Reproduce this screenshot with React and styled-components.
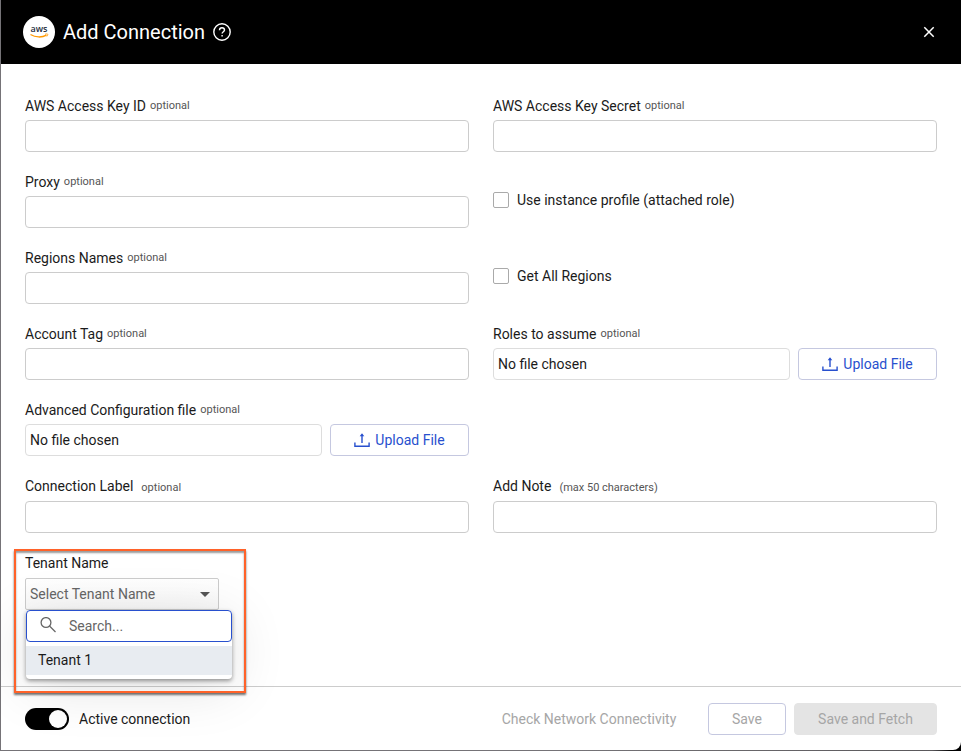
import React, { useState } from "react";
import styled, { createGlobalStyle } from "styled-components";

const GlobalStyle = createGlobalStyle`
  *, *::before, *::after { box-sizing: border-box; }
  html { background: #3a383b; }
  body {
    margin: 0;
    background: linear-gradient(90deg, #757377 60%, #5a585b 97%, #000 99%);
    color: #1b1b1b;
    font: 400 14px/20px Roboto, "Liberation Sans", sans-serif;
  }
  button, input, select { font: inherit; color: inherit; margin: 0; }
  #root { display: flow-root; }
`;

const Dialog = styled.form`
  display: flex;
  flex-direction: column;
  min-height: calc(100vh - 1px);
  margin: 0 0 1px 1px;
  background: #fff;
  border-bottom-right-radius: 8px;
`;

const Header = styled.header`
  display: flex;
  align-items: center;
  height: 64px;
  padding: 0 24px 0 22px;
  gap: 8px;
  background: #000;
  color: #fff;
`;

const Title = styled.h1`
  margin: 0;
  font-size: 20px;
  line-height: 28px;
  font-weight: 400;
`;

const IconButton = styled.button`
  display: flex;
  padding: 0;
  border: 0;
  background: none;
  color: #fff;
  margin-left: ${(p) => (p.$end ? "auto" : "0")};
`;

const Body = styled.main`
  flex: 1;
  display: grid;
  grid-template-columns: 1fr 1fr;
  align-content: start;
  gap: 20px 24px;
  padding: 32px 24px 0;
`;

const FieldBox = styled.div`
  grid-column-start: ${(p) => (p.$first ? 1 : "auto")};
  display: flex;
  flex-direction: column;
  gap: ${(p) => (p.$loose ? 5 : 4)}px;
`;

const LabelRow = styled.div`
  display: flex;
  align-items: ${(p) => (p.$loose ? "baseline" : "flex-start")};
  gap: ${(p) => (p.$loose ? 8 : 4)}px;
  height: 20px;
  white-space: nowrap;
`;

const Hint = styled.span`
  font-size: 11px;
  line-height: 20px;
  color: #555;
`;

const TextInput = styled.input`
  width: 100%;
  height: 32px;
  padding: 0 8px;
  border: 1px solid #ccc;
  border-radius: 4px;
  background: #fff;
`;

const FileRow = styled.div`
  display: flex;
  gap: 8px;
`;

const FileName = styled.output`
  flex: 1;
  height: 32px;
  padding: 5px 4px;
  border: 1px solid #ddd;
  border-radius: 4px;
`;

const Button = styled.button`
  display: flex;
  align-items: center;
  justify-content: center;
  gap: 5px;
  height: 32px;
  min-width: ${(p) => p.$width}px;
  padding: 0 8px;
  border: 1px solid #c5c8e0;
  border-radius: 4px;
  background: #fff;
  color: #2850ce;
  font-weight: 400;
  white-space: nowrap;

  &:disabled {
    color: #a6a6a6;
    background: ${(p) => (p.$filled ? "#e4e4e4" : "#fff")};
    border-color: ${(p) => (p.$filled ? "#e4e4e4" : p.$plain ? "transparent" : "#c5c8e0")};
  }
`;

const CheckLabel = styled.label`
  display: flex;
  align-items: center;
  align-self: center;
  gap: 8px;
`;

const Checkbox = styled.input`
  appearance: none;
  width: 16px;
  height: 16px;
  border: 1px solid #aaa;
  border-radius: 2px;
  background: #fff;

  &:checked { background: #2850ce; }
`;

const TenantField = styled(FieldBox)`
  position: relative;
  z-index: 1;
  width: 207px;
`;

const Highlight = styled.div`
  position: absolute;
  inset: -4px -14px -83px -11px;
  border: 2px solid #ff6229;
  box-shadow: 0 2px 2px rgba(0, 0, 0, 0.55), inset 0 2px 2px rgba(0, 0, 0, 0.4);
  pointer-events: none;
`;

const SelectBox = styled.div`
  display: grid;
  align-items: center;
  width: 194px;

  & > * { grid-area: 1 / 1; }
  & > svg { justify-self: end; margin-right: 9px; pointer-events: none; }
`;

const Select = styled.select`
  appearance: none;
  width: 100%;
  height: 32px;
  padding: 0 24px 0 4px;
  border: 1px solid #ccc;
  border-radius: 2px;
  background: linear-gradient(#fff, #f8f8f8);
  color: #666;
`;

const Menu = styled.div`
  position: absolute;
  top: 57px;
  left: 1px;
  right: 0;
  padding-bottom: 4px;
  border-radius: 4px;
  background: #fff;
  box-shadow: 0 2px 4px rgba(0, 0, 0, 0.4), 0 8px 56px rgba(0, 0, 0, 0.12);
`;

const SearchBox = styled.label`
  display: flex;
  align-items: center;
  gap: 12px;
  height: 32px;
  padding: 0 12px;
  border: 1px solid #2850ce;
  border-radius: 4px;
  background: #fff;
`;

const SearchInput = styled.input`
  flex: 1;
  min-width: 0;
  padding: 0;
  border: 0;
  outline: 0;
  background: none;

  &::placeholder { color: #666; opacity: 1; }
`;

const Option = styled.div`
  margin-top: 4px;
  padding: 4px 12px 5px;
  background: #e8ecf1;
`;

const Footer = styled.footer`
  display: flex;
  align-items: center;
  gap: 8px;
  height: 64px;
  padding: 0 24px;
  border-top: 1px solid #ccc;
`;

const SwitchLabel = styled.label`
  display: flex;
  align-items: center;
  gap: 10px;
  margin-right: auto;
`;

const Switch = styled.input`
  appearance: none;
  display: flex;
  align-items: center;
  width: 44px;
  height: 22px;
  padding: 0 2px;
  border-radius: 11px;
  background: #888;

  &::before {
    content: "";
    width: 18px;
    height: 18px;
    border-radius: 50%;
    background: #fff;
  }
  &:checked { background: #000; justify-content: flex-end; }
`;

function AwsLogo() {
  return (
    <svg width="32" height="32" viewBox="0 0 32 32" role="img" aria-label="AWS">
      <circle cx="16" cy="16" r="16" fill="#fff" />
      <text x="16" y="16" textAnchor="middle" fontFamily="Open Sans, sans-serif" fontSize="9" fontWeight="600" fill="#252f3e">aws</text>
      <path d="M7.500 18.500c5 3.200 11.500 3.200 16 .6" fill="none" stroke="#f90" strokeWidth="1.300" />
      <path d="M22 18.300c1-.5 2.300-.5 2.700-.2.300.4-.1 1.600-.9 2.400" fill="none" stroke="#f90" strokeWidth=".8" />
    </svg>
  );
}

function HelpIcon() {
  return (
    <svg width="18" height="18" viewBox="0 0 18 18" fill="none" stroke="currentColor" strokeWidth="1.400">
      <circle cx="9" cy="9" r="8.200" />
      <path d="M6.500 7.200C6.500 5.600 7.500 4.700 9 4.700s2.500.9 2.500 2.200c0 1.800-2.400 1.800-2.400 3.700" />
      <path d="M9.100 12v1.500" />
    </svg>
  );
}

function CloseIcon() {
  return (
    <svg width="16" height="16" viewBox="0 0 16 16" stroke="currentColor" strokeWidth="1.500">
      <path d="M3.300 3.300l9.400 9.400M12.700 3.300l-9.400 9.400" />
    </svg>
  );
}

function UploadIcon() {
  return (
    <svg width="16" height="16" viewBox="0 0 16 16" fill="none" stroke="currentColor" strokeWidth="1.400">
      <path d="M.9 10.500v3.800h14.200v-3.800M8 11V2.500" />
      <path d="M5.700 4.200L8 1.300l2.300 2.900z" fill="currentColor" stroke="none" />
    </svg>
  );
}

function SearchIcon() {
  return (
    <svg width="18" height="18" viewBox="0 0 18 18" fill="none" stroke="#666" strokeWidth="1.300">
      <circle cx="7" cy="5.500" r="4.900" />
      <path d="M10.500 9l6 6" />
    </svg>
  );
}

function Caret() {
  return (
    <svg width="10" height="5" viewBox="0 0 10 5" fill="#555">
      <path d="M0 0h10L5 5z" />
    </svg>
  );
}

function Field({ id, label, hint = "optional", first, loose }) {
  return (
    <FieldBox $first={first} $loose={loose}>
      <LabelRow $loose={loose}>
        <label htmlFor={id}>{label}</label>
        <Hint>{hint}</Hint>
      </LabelRow>
      <TextInput id={id} type="text" />
    </FieldBox>
  );
}

function FileField({ id, label, first }) {
  return (
    <FieldBox $first={first}>
      <LabelRow>
        <label htmlFor={id}>{label}</label>
        <Hint>optional</Hint>
      </LabelRow>
      <FileRow>
        <FileName>No file chosen</FileName>
        <Button id={id} type="button" $width={139}>
          <UploadIcon />
          Upload File
        </Button>
      </FileRow>
    </FieldBox>
  );
}

function Check({ label }) {
  return (
    <CheckLabel>
      <Checkbox type="checkbox" />
      {label}
    </CheckLabel>
  );
}

export default function App() {
  const [active, setActive] = useState(true);
  return (
    <>
      <GlobalStyle />
      <Dialog>
        <Header>
          <AwsLogo />
          <Title>Add Connection</Title>
          <IconButton type="button" aria-label="Help"><HelpIcon /></IconButton>
          <IconButton type="button" aria-label="Close" $end><CloseIcon /></IconButton>
        </Header>
        <Body>
          <Field id="key-id" label="AWS Access Key ID" />
          <Field id="key-secret" label="AWS Access Key Secret" />
          <Field id="proxy" label="Proxy" />
          <Check label="Use instance profile (attached role)" />
          <Field id="regions" label="Regions Names" />
          <Check label="Get All Regions" />
          <Field id="tag" label="Account Tag" />
          <FileField id="roles" label="Roles to assume" />
          <FileField id="config" label="Advanced Configuration file" first />
          <Field id="label" label="Connection Label" first loose />
          <Field id="note" label="Add Note" hint="(max 50 characters)" loose />
          <TenantField $first $loose>
            <label htmlFor="tenant">Tenant Name</label>
            <SelectBox>
              <Select id="tenant" defaultValue="">
                <option value="">Select Tenant Name</option>
                <option value="1">Tenant 1</option>
              </Select>
              <Caret />
            </SelectBox>
            <Menu>
              <SearchBox>
                <SearchIcon />
                <SearchInput type="text" placeholder="Search..." aria-label="Search tenants" />
              </SearchBox>
              <div role="listbox" aria-label="Tenants">
                <Option role="option" aria-selected="true">Tenant 1</Option>
              </div>
            </Menu>
            <Highlight />
          </TenantField>
        </Body>
        <Footer>
          <SwitchLabel>
            <Switch type="checkbox" role="switch" checked={active} onChange={(e) => setActive(e.target.checked)} />
            Active connection
          </SwitchLabel>
          <Button type="button" disabled $plain $width={222}>Check Network Connectivity</Button>
          <Button type="submit" disabled $width={78}>Save</Button>
          <Button type="button" disabled $filled $width={143}>Save and Fetch</Button>
        </Footer>
      </Dialog>
    </>
  );
}
